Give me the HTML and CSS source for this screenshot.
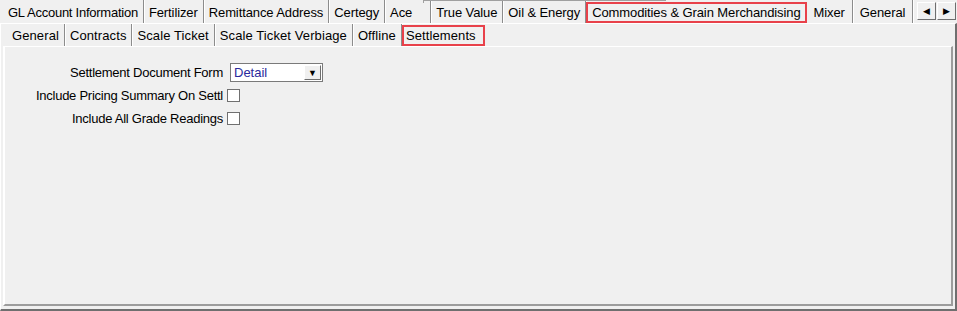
FILE: index.html
```html
<!DOCTYPE html>
<html lang="en">
<head>
    <meta charset="UTF-8">
    <title>Settlements</title>
    <link rel="stylesheet" href="styles.css">
</head>
<body>
    <div class="tabs">
        <div class="tab-row top-row">
            <span class="tab tab-first">GL Account Information</span>
            <span class="tab">Fertilizer</span>
            <span class="tab">Remittance Address</span>
            <span class="tab">Certegy</span>
            <span class="tab tab-wide">Ace</span>
            <span class="tab">True Value</span>
            <span class="tab">Oil &amp; Energy</span>
            <span class="tab tab-marked">Commodities &amp; Grain Merchandising</span>
            <span class="tab tab-loose">Mixer</span>
            <span class="tab tab-loose">General</span>
            <div class="scroller">
                <span class="scroll-btn">&#9664;</span>
                <span class="scroll-btn">&#9654;</span>
            </div>
        </div>
        <div class="outer-panel">
            <div class="tab-row sub-row">
                <span class="tab">General</span>
                <span class="tab">Contracts</span>
                <span class="tab">Scale Ticket</span>
                <span class="tab">Scale Ticket Verbiage</span>
                <span class="tab">Offline</span>
                <span class="tab tab-marked">Settlements</span>
            </div>
            <div class="inner-panel">
                <div class="form">
                    <label class="form-label">Settlement Document Form</label>
                    <div class="combo">
                        <span class="combo-value">Detail</span>
                        <span class="combo-btn">&#9660;</span>
                    </div>
                    <label class="form-label">Include Pricing Summary On Settl</label>
                    <span class="check"></span>
                    <label class="form-label">Include All Grade Readings</label>
                    <span class="check"></span>
                </div>
            </div>
        </div>
    </div>
</body>
</html>
```

FILE: styles.css
```css
body {
    margin: 0;
    background-color: #f0f0f0;
    font-family: "Liberation Sans", Arial, sans-serif;
    font-size: 13px;
    color: #000;
}
.tabs {
    width: 957px;
    height: 311px;
    display: flex;
    flex-direction: column;
    overflow: hidden;
}
.tab-row {
    display: flex;
    align-items: stretch;
}
.top-row {
    height: 23px;
    padding-left: 3px;
    position: relative;
}
/* edge of the tab strip scrolled behind the row */
.top-row::before {
    content: "";
    position: absolute;
    left: 423px;
    top: 0;
    width: 242px;
    height: 2px;
    border-top: 1px solid #a0a0a0;
    border-left: 1px solid #a0a0a0;
}
.tab {
    display: flex;
    align-items: center;
    padding: 0 5px;
    border-right: 1px solid #8c8c8c;
    box-shadow: 1px 0 0 #fff;
    white-space: nowrap;
}
.top-row .tab {
    padding-top: 1px;
    letter-spacing: -0.1px;
}
.top-row .tab-first {
    letter-spacing: -0.25px;
}
.top-row .tab-wide {
    padding-right: 18px;
}
.top-row .tab-loose {
    padding: 1px 7px 0 7px;
}
.tab-marked {
    border: 2px solid #e8414a;
    box-shadow: none;
    margin-top: 2px;
    position: relative;
    background-color: #f0f0f0;
}
.top-row .tab-marked {
    padding: 0 4px;
}
.scroller {
    margin-left: auto;
    display: flex;
    gap: 1px;
    padding: 2px 1px 3px 0;
}
.scroll-btn {
    width: 17px;
    display: flex;
    align-items: center;
    justify-content: center;
    font-size: 9px;
    background-color: #f0f0f0;
    border: 1px solid;
    border-color: #fff #6e6e6e #6e6e6e #fff;
}
.outer-panel {
    flex: 1;
    display: flex;
    flex-direction: column;
    border-left: 1px solid #fff;
    border-top: 1px solid #fff;
    border-right: 2px solid #6f6f6f;
    border-bottom: 2px solid #6f6f6f;
    padding: 0 2px 3px 2px;
}
.sub-row {
    height: 22px;
    padding-left: 4px;
}
.sub-row .tab {
    letter-spacing: 0.1px;
}
.sub-row .tab-marked {
    margin-top: 1px;
    padding: 0 7px 0 2px;
}
.inner-panel {
    flex: 1;
    border-left: 2px solid #fff;
    border-top: 1px solid #fff;
    border-right: 2px solid #9c9c9c;
    border-bottom: 2px solid #9c9c9c;
    padding-top: 14px;
}
.form {
    display: grid;
    grid-template-columns: 218px auto;
    grid-auto-rows: 23px;
    justify-content: start;
    align-items: center;
    column-gap: 4px;
}
.form-label {
    text-align: right;
    letter-spacing: -0.25px;
}
.combo {
    width: 91px;
    height: 17px;
    margin-left: 3px;
    display: flex;
    align-items: center;
    justify-content: space-between;
    background-color: #fff;
    border: 1px solid #7a7a7a;
}
.combo-value {
    padding-left: 3px;
    color: #2a2a9c;
}
.combo-btn {
    width: 17px;
    height: 15px;
    margin-right: 1px;
    display: flex;
    align-items: center;
    justify-content: center;
    font-size: 9px;
    background-color: #f0f0f0;
    border: 1px solid;
    border-color: #fff #6e6e6e #6e6e6e #fff;
    box-sizing: border-box;
}
.check {
    width: 11px;
    height: 11px;
    background-color: #fff;
    border: 1px solid #707070;
}
```
